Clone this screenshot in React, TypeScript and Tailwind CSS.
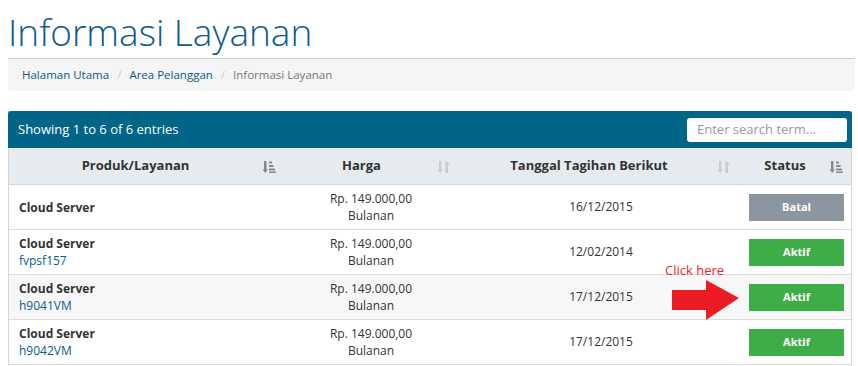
import React from 'react'

const SortIcon = ({ active }: { active?: boolean }) => {
  const c = active ? '#8a8a8a' : '#c8cdd2'
  if (active) {
    return (
      <svg width="14" height="14" viewBox="0 0 14 14">
        <rect x="2" y="1" width="2.5" height="9" fill={c} />
        <path d="M0.5 9.5 L6 9.5 L3.25 13 Z" fill={c} />
        <rect x="7" y="1.5" width="3" height="2" fill={c} />
        <rect x="7" y="5" width="4.5" height="2" fill={c} />
        <rect x="7" y="8.5" width="6" height="2" fill={c} />
        <rect x="7" y="11.5" width="7" height="1.5" fill={c} />
      </svg>
    )
  }
  return (
    <svg width="14" height="14" viewBox="0 0 14 14">
      <rect x="2" y="1" width="2.5" height="9" fill={c} />
      <path d="M0.5 9.5 L6 9.5 L3.25 13 Z" fill={c} />
      <rect x="8.5" y="4" width="2.5" height="9" fill={c} />
      <path d="M7 4.5 L12.5 4.5 L9.75 1 Z" fill={c} />
    </svg>
  )
}

const rows = [
  { name: 'Cloud Server', sub: '', date: '16/12/2015', status: 'Batal', bg: 'bg-white' },
  { name: 'Cloud Server', sub: 'fvpsf157', date: '12/02/2014', status: 'Aktif', bg: 'bg-white' },
  { name: 'Cloud Server', sub: 'h9041VM', date: '17/12/2015', status: 'Aktif', bg: 'bg-[#f7f7f7]' },
  { name: 'Cloud Server', sub: 'h9042VM', date: '17/12/2015', status: 'Aktif', bg: 'bg-white' },
]

const App = () => {
  return (
    <div className="w-[858px] h-[366px] overflow-hidden bg-white font-['Open_Sans',sans-serif] text-[#333]">
      <div className="pl-[8px] pr-[3px]">
        <h1 className="pt-[9px] text-[37px] leading-[46px] text-[#0b5a8c] font-['Open_Sans',sans-serif] font-light">
          Informasi Layanan
        </h1>
        <div className="mt-[3px] h-[33px] bg-[#f5f5f5] border-t border-[#cfcfcf] rounded-b-[4px] flex items-center pl-[14px] text-[11.5px]">
          <span className="text-[#0b5a8c]">Halaman Utama</span>
          <span className="text-[#ccc] px-[8px]">/</span>
          <span className="text-[#0b5a8c]">Area Pelanggan</span>
          <span className="text-[#ccc] px-[8px]">/</span>
          <span className="text-[#777]">Informasi Layanan</span>
        </div>

        <div className="mt-[20px] mr-[3px] border-x border-[#d4d4d4]">
          <div className="h-[37px] bg-[#006587] rounded-t-[3px] -mx-px flex items-center justify-between pl-[10px] pr-[5px]">
            <span className="text-white text-[13px]">Showing 1 to 6 of 6 entries</span>
            <div className="w-[160px] h-[24px] bg-white rounded-[3px] flex items-center pl-[10px] text-[13px] text-[#999]">
              Enter search term...
            </div>
          </div>
          <div className="grid grid-cols-[277px_175px_280px_1fr]">
            <div className="h-[37px] bg-[#e6ebef] border-b border-[#d8d8d8] flex items-center text-[13px] font-bold">
              <span className="flex-1 text-center">Produk/Layanan</span>
              <span className="pr-[10px] pt-[2px]"><SortIcon active /></span>
            </div>
            <div className="h-[37px] bg-[#e6ebef] border-b border-[#d8d8d8] flex items-center text-[13px] font-bold">
              <span className="flex-1 text-center">Harga</span>
              <span className="pr-[10px] pt-[2px]"><SortIcon /></span>
            </div>
            <div className="h-[37px] bg-[#e6ebef] border-b border-[#d8d8d8] flex items-center text-[13px] font-bold">
              <span className="flex-1 text-center">Tanggal Tagihan Berikut</span>
              <span className="pr-[10px] pt-[2px]"><SortIcon /></span>
            </div>
            <div className="h-[37px] bg-[#e6ebef] border-b border-[#d8d8d8] flex items-center text-[13px] font-bold">
              <span className="flex-1 text-center">Status</span>
              <span className="pr-[8px] pt-[2px]"><SortIcon active /></span>
            </div>

            {rows.map((r, i) => (
              <React.Fragment key={i}>
                <div className={`h-[45px] ${r.bg} border-b border-[#dcdcdc] flex flex-col justify-center pl-[10px] text-[12px] leading-[17px]`}>
                  <span className="font-bold">{r.name}</span>
                  {r.sub && <span className="text-[#0b5a8c]">{r.sub}</span>}
                </div>
                <div className={`h-[45px] ${r.bg} border-b border-[#dcdcdc] flex flex-col justify-center items-center pr-[5px] text-[12px] leading-[17px]`}>
                  <span>Rp. 149.000,00</span>
                  <span>Bulanan</span>
                </div>
                <div className={`h-[45px] ${r.bg} border-b border-[#dcdcdc] flex items-center justify-center text-[12px] relative`}>
                  <span>{r.date}</span>
                  {i === 1 && (
                    <span className="absolute left-[204px] top-[31px] text-[13px] text-[#ec2228] whitespace-nowrap">Click here</span>
                  )}
                  {i === 2 && (
                    <svg className="absolute left-[211px] top-[5px]" width="68" height="41" viewBox="0 0 68 41">
                      <path d="M0 10 L34 10 L34 0 L67 18 L34 40 L34 30 L0 30 Z" fill="#ec1c24" />
                    </svg>
                  )}
                </div>
                <div className={`h-[45px] ${r.bg} border-b border-[#dcdcdc] flex items-center pl-[8px]`}>
                  <span className={`w-[95px] h-[27px] flex items-center justify-center text-white text-[11px] font-bold ${r.status === 'Batal' ? 'bg-[#8b96a0]' : 'bg-[#3fad47]'}`}>
                    {r.status}
                  </span>
                </div>
              </React.Fragment>
            ))}
          </div>
        </div>
      </div>
    </div>
  )
}

export default App
